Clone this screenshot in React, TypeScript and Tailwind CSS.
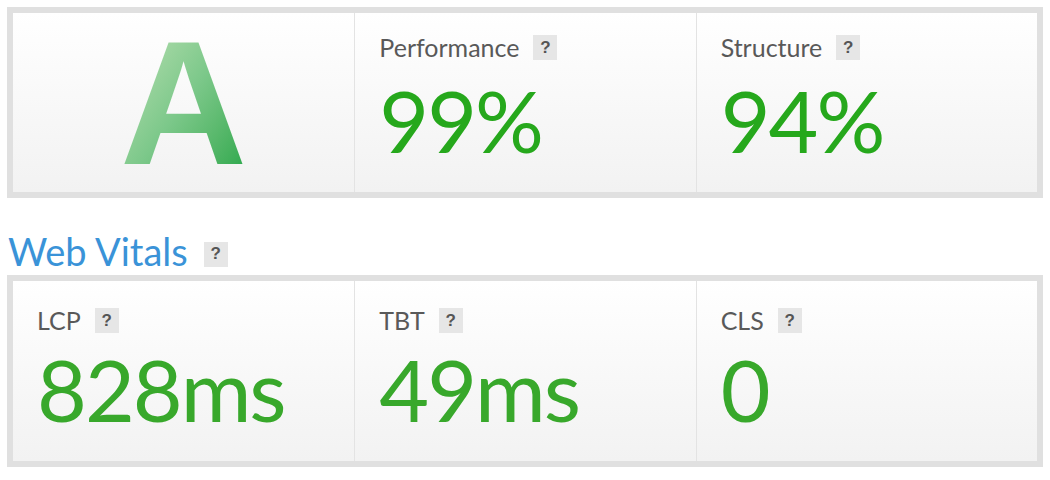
import React from "react";

const Help = ({ className = "" }: { className?: string }) => (
  <span
    className={`inline-flex items-center justify-center w-6 h-[25px] bg-[#e6e6e6] text-[#555] text-[17px] font-bold font-['Liberation_Sans',sans-serif] ${className}`}
  >
    ?
  </span>
);

type Metric = { label: string; value: string };

const MetricCell = ({
  m,
  green,
  first,
  vital,
}: {
  m: Metric;
  green: string;
  first?: boolean;
  vital?: boolean;
}) => (
  <div className={`pl-6 ${vital ? "pt-[26px]" : "pt-[21px]"} ${first ? "" : "border-l border-[#e3e3e3]"}`}>
    <div className="flex items-center gap-[14px] h-[27px]">
      <span className="text-[25px] leading-none text-[#595959]">{m.label}</span>
      <Help />
    </div>
    <div className={`${vital ? "mt-[12px]" : "mt-[16px]"} text-[86px] leading-none tracking-[-2px] ${green}`}>
      {m.value}
    </div>
  </div>
);

const App = () => {
  const top: Metric[] = [
    { label: "Performance", value: "99%" },
    { label: "Structure", value: "94%" },
  ];
  const vitals: Metric[] = [
    { label: "LCP", value: "828ms" },
    { label: "TBT", value: "49ms" },
    { label: "CLS", value: "0" },
  ];

  return (
    <div className="w-[1050px] h-[480px] bg-white pl-[7px] pt-[7px] font-['Lato',sans-serif]">
      {/* grade panel */}
      <div className="w-[1036px] h-[191px] border-[6px] border-[#e0e0e0] bg-linear-to-b from-white to-[#f2f2f2] grid grid-cols-3">
        <div className="flex items-center justify-center">
          <span className="inline-block font-['Liberation_Sans',sans-serif] font-bold text-[176px] leading-none bg-linear-to-br from-[#c2e4b9] via-[#7cc88a] to-[#14a443] bg-clip-text text-transparent">
            A
          </span>
        </div>
        {top.map((m) => (
          <MetricCell key={m.label} m={m} green="text-[#26a81c]" />
        ))}
      </div>

      {/* web vitals */}
      <div className="flex items-center gap-[16px] mt-[38px] h-[30px]">
        <h2 className="text-[38px] leading-none text-[#3a93d8] ml-[1px]">Web Vitals</h2>
        <Help className="mt-[6px]" />
      </div>
      <div className="mt-[9px] w-[1036px] h-[192px] border-[6px] border-[#e0e0e0] bg-linear-to-b from-white to-[#f2f2f2] grid grid-cols-3">
        {vitals.map((m, i) => (
          <MetricCell key={m.label} m={m} green="text-[#38a82b]" first={i === 0} vital />
        ))}
      </div>
    </div>
  );
};

export default App;
